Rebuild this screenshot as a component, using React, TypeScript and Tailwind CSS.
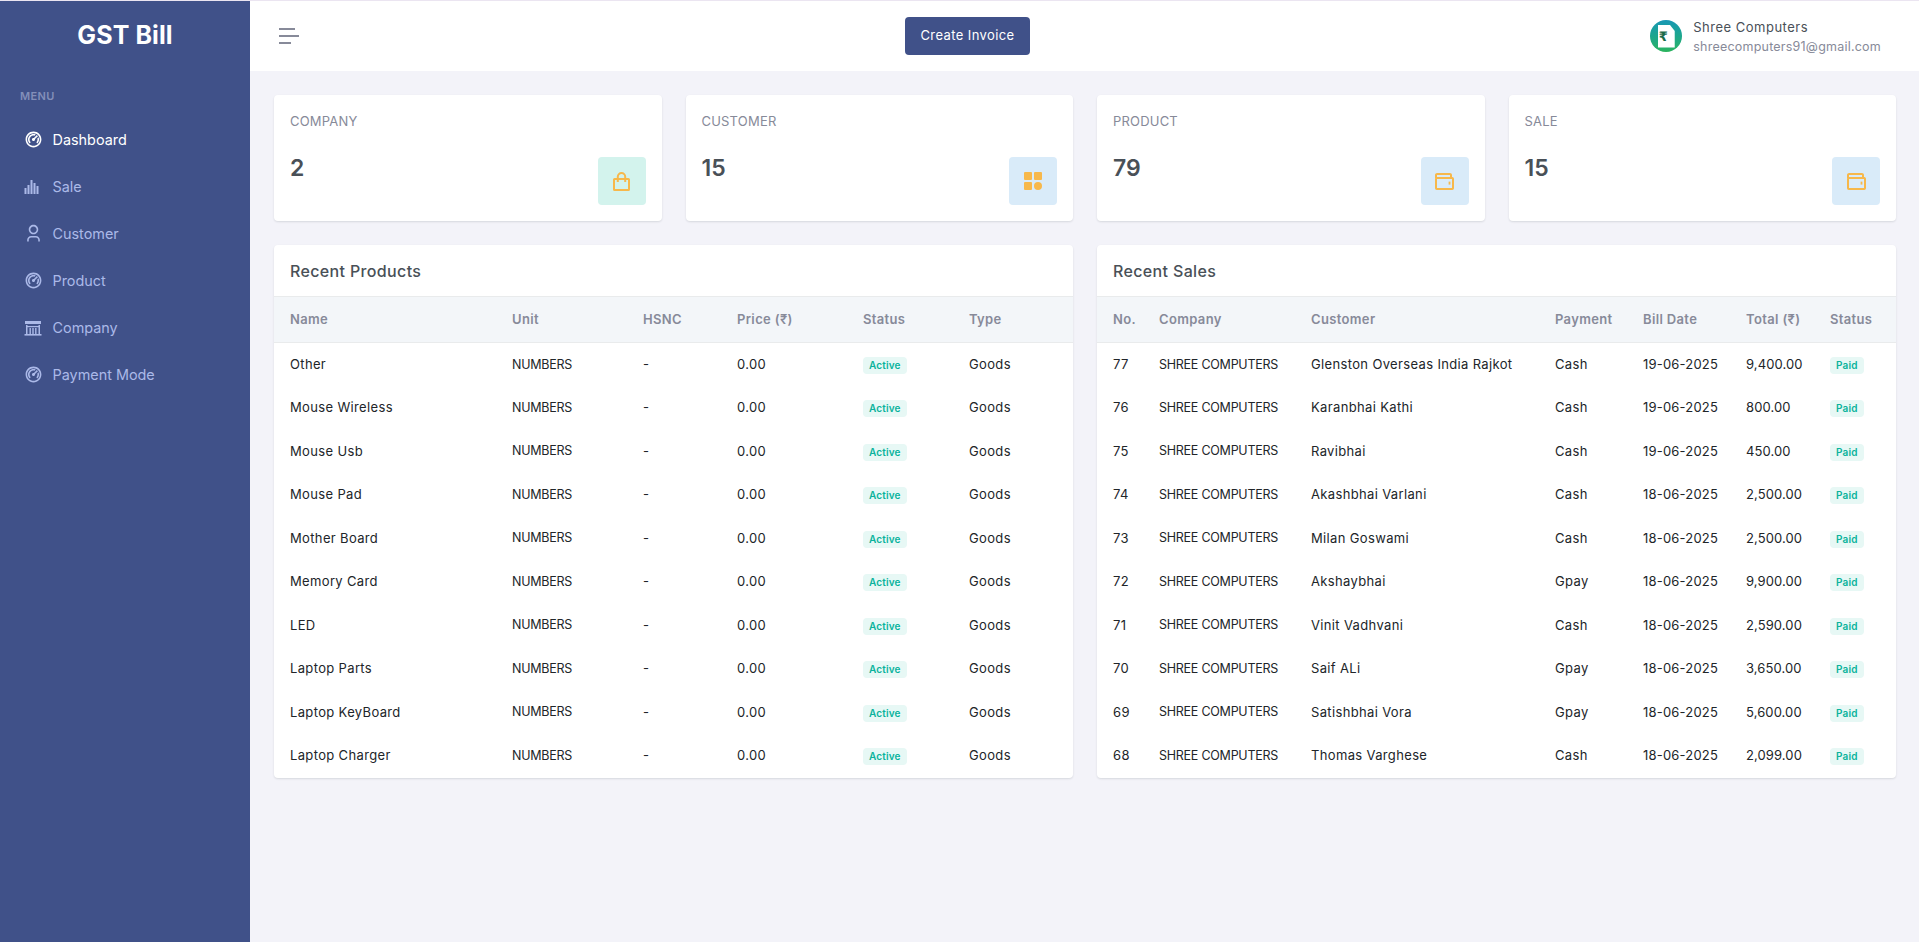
import { RiDashboard2Line, RiUser3Line } from 'react-icons/ri'

// ── Data ──────────────────────────────────────────────────────────────────────

const PRODUCTS = [
  'Other',
  'Mouse Wireless',
  'Mouse Usb',
  'Mouse Pad',
  'Mother Board',
  'Memory Card',
  'LED',
  'Laptop Parts',
  'Laptop KeyBoard',
  'Laptop Charger',
]

const SALES = [
  ['77', 'Glenston Overseas India Rajkot', 'Cash', '19-06-2025', '9,400.00'],
  ['76', 'Karanbhai Kathi', 'Cash', '19-06-2025', '800.00'],
  ['75', 'Ravibhai', 'Cash', '19-06-2025', '450.00'],
  ['74', 'Akashbhai Varlani', 'Cash', '18-06-2025', '2,500.00'],
  ['73', 'Milan Goswami', 'Cash', '18-06-2025', '2,500.00'],
  ['72', 'Akshaybhai', 'Gpay', '18-06-2025', '9,900.00'],
  ['71', 'Vinit Vadhvani', 'Cash', '18-06-2025', '2,590.00'],
  ['70', 'Saif ALi', 'Gpay', '18-06-2025', '3,650.00'],
  ['69', 'Satishbhai Vora', 'Gpay', '18-06-2025', '5,600.00'],
  ['68', 'Thomas Varghese', 'Cash', '18-06-2025', '2,099.00'],
]

// ── Drawn icons ───────────────────────────────────────────────────────────────

function BarsIcon() {
  return (
    <svg viewBox="0 0 16 16" className="w-4 h-4" fill="currentColor">
      <rect x="0.5" y="9" width="2" height="6" />
      <rect x="3.5" y="6" width="2" height="9" />
      <rect x="6.5" y="1" width="2" height="14" />
      <rect x="9.5" y="4" width="2" height="11" />
      <rect x="12.5" y="7" width="2" height="8" />
    </svg>
  )
}

function BuildingIcon() {
  return (
    <svg viewBox="0 0 18 16" className="w-[18px] h-4" fill="currentColor">
      <path d="M1 1h16v3H1z" />
      <path d="M2 5h1.5v9H2zM14.5 5H16v9h-1.5z" />
      <path d="M5.5 8h1.4v6H5.5zM8.3 8h1.4v6H8.3zM11.1 8h1.4v6h-1.4z" />
      <path d="M3 6h12v1.2H3z" />
      <path d="M0.5 14h17v1.6H0.5z" />
    </svg>
  )
}

function GridIcon() {
  return (
    <svg viewBox="0 0 18 18" className="w-[18px] h-[18px]" fill="#f7b84b">
      <rect x="0" y="0" width="8" height="8" rx="1" />
      <rect x="10" y="0" width="8" height="8" rx="1" />
      <rect x="0" y="10" width="8" height="8" rx="1" />
      <circle cx="14" cy="14" r="4" />
    </svg>
  )
}

function BagIcon() {
  return (
    <svg viewBox="0 0 17 19" className="w-[17px] h-[19px]" fill="none" stroke="#f7b84b" strokeWidth="2">
      <rect x="1" y="7" width="15" height="11" rx="0.6" />
      <path d="M4.8 10V4.7a3.7 3.7 0 0 1 7.4 0V10" />
    </svg>
  )
}

function WalletIcon() {
  return (
    <svg viewBox="0 0 19 17" className="w-[19px] h-[17px]" fill="none" stroke="#f7b84b" strokeWidth="2">
      <rect x="1" y="5" width="17" height="11" rx="0.8" />
      <path d="M1 5V2.1A1.1 1.1 0 0 1 2.1 1h12.8A1.1 1.1 0 0 1 16 2.1V5" />
      <path d="M14.5 8.6v3" strokeWidth="1.8" />
    </svg>
  )
}

function LogoAvatar() {
  return (
    <div className="w-8 h-8 rounded-full bg-gradient-to-b from-[#1a97b4] to-[#2bb35c] flex items-center justify-center shrink-0">
      <div className="w-[17px] h-[23px] bg-white flex items-center pl-px [clip-path:polygon(0_0,70%_0,100%_28%,100%_100%,0_100%)]">
        <span className="font-['DejaVu_Sans',sans-serif] text-[13px] leading-none font-bold text-[#1a6b4a]">₹</span>
      </div>
    </div>
  )
}

// ── Sidebar ───────────────────────────────────────────────────────────────────

const MENU = [
  { label: 'Dashboard', icon: <RiDashboard2Line className="w-[19px] h-[19px]" />, active: true },
  { label: 'Sale', icon: <BarsIcon /> },
  { label: 'Customer', icon: <RiUser3Line className="w-[19px] h-[19px]" /> },
  { label: 'Product', icon: <RiDashboard2Line className="w-[19px] h-[19px]" /> },
  { label: 'Company', icon: <BuildingIcon /> },
  { label: 'Payment Mode', icon: <RiDashboard2Line className="w-[19px] h-[19px]" /> },
]

function Sidebar() {
  return (
    <aside className="w-[250px] shrink-0 bg-[#405189] flex flex-col">
      <div className="h-[70px] flex items-center justify-center text-white font-bold text-[25px] tracking-[0.1px]">
        GST Bill
      </div>
      <div className="pl-5 pt-[18px] pb-[13px] text-[11px] leading-[14px] font-semibold tracking-[0.4px] text-[#838fb9]">
        MENU
      </div>
      <nav className="flex flex-col">
        {MENU.map(item => (
          <a
            key={item.label}
            className={`h-[47px] flex items-center pl-6 text-[14.4px] ${item.active ? 'text-white' : 'text-[#abb9e8]'}`}
          >
            <span className="w-[28.5px] flex items-center">{item.icon}</span>
            {item.label}
          </a>
        ))}
      </nav>
    </aside>
  )
}

// ── Header ────────────────────────────────────────────────────────────────────

function Topbar() {
  return (
    <header className="h-[70px] shrink-0 bg-white flex items-center pl-[29px] pr-[38px]">
      <div className="w-[626px] flex flex-col gap-[5px]">
        <span className="block w-4 h-0.5 bg-[#878a99]" />
        <span className="block w-5 h-0.5 bg-[#878a99]" />
        <span className="block w-3 h-0.5 bg-[#878a99]" />
      </div>
      <button className="w-[125px] h-[38px] bg-[#405189] rounded text-white text-[13px] tracking-[0.4px]">
        Create Invoice
      </button>
      <div className="ml-auto flex items-center gap-[11px]">
        <LogoAvatar />
        <div className="flex flex-col">
          <span className="text-[13px] leading-5 tracking-[0.5px] text-[#495057]">Shree Computers</span>
          <span className="text-[12.5px] leading-[19px] tracking-[0.22px] text-[#878a99]">shreecomputers91@gmail.com</span>
        </div>
      </div>
    </header>
  )
}

// ── Cards ─────────────────────────────────────────────────────────────────────

function StatCard({ label, value, tint, icon }: { label: string; value: string; tint: string; icon: React.ReactNode }) {
  return (
    <div className="h-[126px] bg-white rounded shadow-[0_1px_2px_rgba(56,65,74,0.15)] p-4 flex flex-col">
      <div className="text-[13px] leading-5 text-[#878a99] tracking-[0.2px]">{label}</div>
      <div className="flex-1 flex justify-between items-start mt-5">
        <span className="text-[23px] leading-[34px] font-semibold text-[#495057]">{value}</span>
        <span className={`w-12 h-12 mt-1.5 rounded flex items-center justify-center ${tint}`}>
          {icon}
        </span>
      </div>
    </div>
  )
}

function Badge({ children }: { children: string }) {
  return (
    <span className="inline-flex items-center h-[17px] px-1.5 mt-0.5 rounded bg-[#e7f8f5] text-[#0ab39c] text-[10px] font-semibold tracking-[0.15px]">
      {children}
    </span>
  )
}

function TableCard({
  title,
  widths,
  heads,
  children,
}: {
  title: string
  widths: string[]
  heads: string[]
  children: React.ReactNode
}) {
  return (
    <div className="bg-white rounded shadow-[0_1px_2px_rgba(56,65,74,0.15)] overflow-hidden">
      <h4 className="h-[51px] flex items-center px-4 text-[16px] font-medium text-[#495057] tracking-[0.35px]">
        {title}
      </h4>
      <table className="w-full table-fixed border-collapse text-[13px] text-[#212529] tracking-[0.35px]">
        <colgroup>
          {widths.map((w, i) => (
            <col key={i} className={w} />
          ))}
        </colgroup>
        <thead>
          <tr className="h-[46px] bg-[#f3f6f9] border-y border-[#e9ebec]">
            {heads.map(h => (
              <th key={h} className="pl-4 text-left font-semibold text-[#878a99] whitespace-nowrap">
                {h}
              </th>
            ))}
          </tr>
        </thead>
        <tbody>{children}</tbody>
      </table>
    </div>
  )
}

// ── Page ──────────────────────────────────────────────────────────────────────

export default function App() {
  return (
    <div className="min-h-screen flex border-t border-[#ebe5f1] bg-[#f3f3f9] font-['Inter',sans-serif]">
      <Sidebar />
      <div className="flex-1 flex flex-col min-w-0">
        <Topbar />
        <main className="pt-6 pl-6 pr-[23px] flex flex-col gap-6">
          <div className="grid grid-cols-4 gap-6">
            <StatCard label="COMPANY" value="2" tint="bg-[#d3f3ed]" icon={<BagIcon />} />
            <StatCard label="CUSTOMER" value="15" tint="bg-[#d9ebf9]" icon={<GridIcon />} />
            <StatCard label="PRODUCT" value="79" tint="bg-[#d9ebf9]" icon={<WalletIcon />} />
            <StatCard label="SALE" value="15" tint="bg-[#d9ebf9]" icon={<WalletIcon />} />
          </div>
          <div className="grid grid-cols-2 gap-6">
            <TableCard
              title="Recent Products"
              widths={['w-[222px]', 'w-[131px]', 'w-[94px]', 'w-[126px]', 'w-[106px]', 'w-[120px]']}
              heads={['Name', 'Unit', 'HSNC', 'Price (₹)', 'Status', 'Type']}
            >
              {PRODUCTS.map(name => (
                <tr key={name} className="h-[43.5px]">
                  <td className="pl-4">{name}</td>
                  <td className="pl-4 pt-px text-[12.5px] tracking-[-0.25px]">NUMBERS</td>
                  <td className="pl-4">-</td>
                  <td className="pl-4">0.00</td>
                  <td className="pl-4"><Badge>Active</Badge></td>
                  <td className="pl-4">Goods</td>
                </tr>
              ))}
            </TableCard>
            <TableCard
              title="Recent Sales"
              widths={['w-[46px]', 'w-[152px]', 'w-[244px]', 'w-[88px]', 'w-[103px]', 'w-[84px]', 'w-[82px]']}
              heads={['No.', 'Company', 'Customer', 'Payment', 'Bill Date', 'Total (₹)', 'Status']}
            >
              {SALES.map(([no, customer, payment, date, total]) => (
                <tr key={no} className="h-[43.5px]">
                  <td className="pl-4 whitespace-nowrap">{no}</td>
                  <td className="pl-4 pt-px whitespace-nowrap text-[12.5px] tracking-[-0.25px]">SHREE COMPUTERS</td>
                  <td className="pl-4 whitespace-nowrap">{customer}</td>
                  <td className="pl-4 whitespace-nowrap">{payment}</td>
                  <td className="pl-4 whitespace-nowrap tracking-[0.2px]">{date}</td>
                  <td className="pl-4 whitespace-nowrap tracking-[0.1px]">{total}</td>
                  <td className="pl-4"><Badge>Paid</Badge></td>
                </tr>
              ))}
            </TableCard>
          </div>
        </main>
      </div>
    </div>
  )
}
